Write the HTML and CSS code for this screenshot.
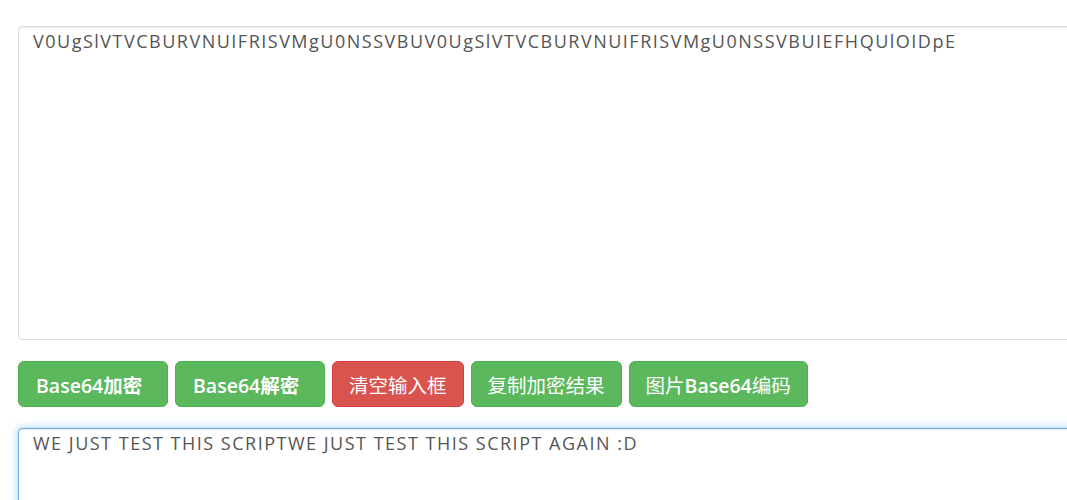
FILE: index.html
```html
<!DOCTYPE html>
<html lang="zh-CN">
<head>
  <meta charset="UTF-8">
  <meta name="viewport" content="width=device-width, initial-scale=1.0">
  <title>Base64在线加密解密</title>
  <link rel="stylesheet" href="styles.css">
</head>
<body>
  <div class="tool-wrap">
    <textarea id="source" class="form-control box-top">V0UgSlVTVCBURVNUIFRISVMgU0NSSVBUV0UgSlVTVCBURVNUIFRISVMgU0NSSVBUIEFHQUlOIDpE</textarea>

    <div class="btn-row">
      <button class="btn btn-success btn-wide"><b>Base64加密</b></button>
      <button class="btn btn-success btn-wide"><b>Base64解密</b></button>
      <button class="btn btn-danger">清空输入框</button>
      <button class="btn btn-success">复制加密结果</button>
      <button class="btn btn-success">图片<b>Base64</b>编码</button>
    </div>

    <textarea id="result" class="form-control box-bottom focus">WE JUST TEST THIS SCRIPTWE JUST TEST THIS SCRIPT AGAIN :D</textarea>
  </div>
</body>
</html>
```

FILE: styles.css
```css
html, body {
  overflow: hidden;
}

body {
  margin: 0;
  padding: 0;
  background-color: #fff;
  font-family: "Open Sans", "Noto Sans CJK SC", sans-serif;
  color: #555;
}

.tool-wrap {
  padding: 26px 0 0 18px;
  width: 1120px;
}

.form-control {
  display: block;
  box-sizing: border-box;
  width: 100%;
  padding: 2px 12px 2px 14px;
  font-family: "Open Sans", "Noto Sans CJK SC", sans-serif;
  font-size: 18px;
  line-height: 24px;
  letter-spacing: 1.5px;
  color: #555;
  background-color: #fff;
  border: 1px solid #ddd;
  border-radius: 4px;
  box-shadow: inset 0 1px 1px rgba(0, 0, 0, 0.075);
  resize: none;
  outline: none;
}

.box-top {
  height: 314px;
}

.box-bottom {
  height: 200px;
}

.form-control.focus {
  border-color: #66afe9;
  box-shadow: inset 0 1px 1px rgba(0, 0, 0, 0.075), 0 0 8px rgba(102, 175, 233, 0.6);
}

.btn-row {
  display: flex;
  gap: 7px;
  margin: 21px 0 21px;
}

.btn {
  box-sizing: border-box;
  height: 46px;
  padding: 0 16px;
  font-family: "Open Sans", "Noto Sans CJK SC", sans-serif;
  font-size: 19.5px;
  color: #fff;
  border: 1px solid transparent;
  border-radius: 6px;
  cursor: pointer;
}

.btn b {
  font-weight: 600;
}

.btn-wide {
  width: 150px;
  text-align: left;
  padding-left: 17px;
}

.btn-success {
  background-color: #5cb85c;
  border-color: #4cae4c;
}

.btn-danger {
  background-color: #d9534f;
  border-color: #d43f3a;
}
```
